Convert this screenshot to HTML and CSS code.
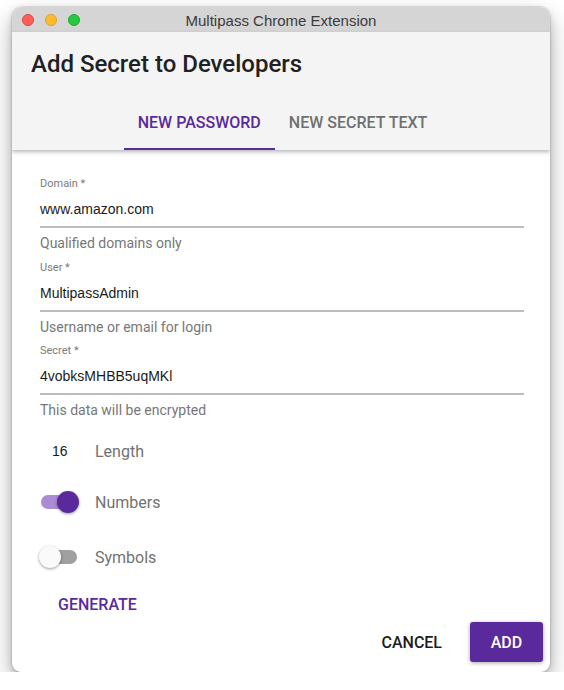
FILE: index.html
```html
<!DOCTYPE html>
<html lang="en">
<head>
<meta charset="utf-8">
<title>Multipass Chrome Extension</title>
<link rel="stylesheet" href="styles.css">
</head>
<body>
<div class="window">
  <div class="titlebar">
    <div class="lights">
      <span class="light red"></span>
      <span class="light yellow"></span>
      <span class="light green"></span>
    </div>
    <div class="wtitle">Multipass Chrome Extension</div>
  </div>
  <header class="header">
    <h1 class="dtitle">Add Secret to Developers</h1>
    <nav class="tabs">
      <div class="tab active">NEW PASSWORD</div>
      <div class="tab">NEW SECRET TEXT</div>
    </nav>
  </header>
  <main class="content">
    <div class="field">
      <div class="label">Domain *</div>
      <div class="value">www.amazon.com</div>
      <div class="helper">Qualified domains only</div>
    </div>
    <div class="field">
      <div class="label">User *</div>
      <div class="value">MultipassAdmin</div>
      <div class="helper">Username or email for login</div>
    </div>
    <div class="field">
      <div class="label">Secret *</div>
      <div class="value">4vobksMHBB5uqMKl</div>
      <div class="helper">This data will be encrypted</div>
    </div>
    <div class="row row-length">
      <div class="num">16</div>
      <div class="rowlabel">Length</div>
    </div>
    <div class="row row-numbers">
      <div class="toggle on"><span class="track"></span><span class="thumb"></span></div>
      <div class="rowlabel">Numbers</div>
    </div>
    <div class="row row-symbols">
      <div class="toggle"><span class="track"></span><span class="thumb"></span></div>
      <div class="rowlabel">Symbols</div>
    </div>
    <div class="generate-row">
      <button class="btn text-primary">GENERATE</button>
    </div>
  </main>
  <div class="actions">
    <button class="btn text-dark">CANCEL</button>
    <button class="btn raised">ADD</button>
  </div>
</div>
</body>
</html>
```
FILE: styles.css
```css
* { box-sizing: border-box; }
html, body { margin: 0; padding: 0; background: #ffffff; }
body { font-family: Roboto, "Noto Sans", sans-serif; }

.window {
  margin: 7px 0 0 12px;
  width: 538px;
  height: 665px;
  border-radius: 10px 10px 9px 9px;
  overflow: hidden;
  background: #ffffff;
  display: flex;
  flex-direction: column;
  box-shadow: 0 0 0 1px rgba(0,0,0,0.08), 0 10px 22px rgba(0,0,0,0.32), 0 2px 6px rgba(0,0,0,0.15);
}

.titlebar {
  height: 25px;
  background: #d5d5d5;
  display: flex;
  align-items: center;
  position: relative;
  flex: none;
}
.lights { display: flex; gap: 11px; padding-left: 10px; }
.light { width: 12px; height: 12px; border-radius: 50%; display: block; }
.red { background: #fc5f57; border: 0.5px solid #e0443e; }
.yellow { background: #fdbc2e; border: 0.5px solid #dea123; }
.green { background: #28c840; border: 0.5px solid #1aab29; }
.wtitle {
  position: absolute; left: 0; right: 0; top: 0; bottom: 0;
  display: flex; align-items: center; justify-content: center;
  font-family: "Liberation Sans", Arial, sans-serif;
  font-size: 15px;
  color: #3b3b3b;
  padding-top: 1px;
}

.header {
  background: #f4f4f4;
  flex: none;
  padding-top: 18px;
  box-shadow: 0 2px 4px rgba(0,0,0,0.28);
  position: relative;
  z-index: 1;
}
.dtitle {
  margin: 0;
  padding-left: 19px;
  font-size: 24px;
  line-height: 28px;
  font-weight: 500;
  color: #212121;
}
.tabs {
  display: flex;
  justify-content: center;
  margin-top: 22px;
  padding-left: 3px;
}
.tab {
  padding: 13px 14px 16px;
  font-size: 16px;
  line-height: 19px;
  font-weight: 500;
  color: #707070;
  border-bottom: 2px solid transparent;
}
.tab.active { color: #5a2a9c; border-bottom-color: #5a2a9c; }

.content {
  flex: 1 1 auto;
  min-height: 0;
  padding: 27px 26px 0 28px;
  display: flex;
  flex-direction: column;
}
.field + .field { margin-top: 9.5px; }
.label {
  font-size: 11px;
  line-height: 13px;
  color: #7b7b7b;
}
.value {
  margin-top: 9px;
  font-family: "Liberation Sans", Arial, sans-serif;
  font-size: 14px;
  line-height: 20px;
  color: #1a1a1a;
  padding-bottom: 7px;
  border-bottom: 2px solid #bdbdbd;
}
.helper {
  margin-top: 7px;
  font-size: 14px;
  line-height: 16px;
  color: #777777;
}

.row {
  display: flex;
  align-items: center;
  height: 40px;
  flex: none;
}
.row-length { margin-top: 13px; }
.row-numbers { margin-top: 11px; }
.row-symbols { margin-top: 15px; }
.num {
  width: 55px;
  padding-left: 12px;
  font-family: "Liberation Sans", Arial, sans-serif;
  font-size: 14px;
  color: #1a1a1a;
}
.rowlabel {
  font-size: 16px;
  color: #727272;
}
.toggle {
  position: relative;
  width: 40px;
  height: 24px;
  margin-left: -1px;
  margin-right: 16px;
}
.track {
  position: absolute;
  left: 2px; top: 5px;
  width: 36px; height: 14px;
  border-radius: 7px;
  background: #a0a0a0;
}
.thumb {
  position: absolute;
  left: 0; top: 1px;
  width: 22px; height: 22px;
  border-radius: 50%;
  background: #fafafa;
  box-shadow: 0 1px 3px rgba(0,0,0,0.4);
}
.toggle.on .track { background: #a98cd3; }
.toggle.on .thumb { left: 18px; background: #5a2a9c; }

.generate-row { margin-top: 9px; height: 36px; display: flex; flex: none; }
.btn {
  font-family: Roboto, "Noto Sans", sans-serif;
  font-size: 16px;
  font-weight: 500;
  border: none;
  background: transparent;
  height: 36px;
  padding: 0 16px;
  border-radius: 3px;
  cursor: pointer;
}
.text-primary { color: #5a2a9c; margin-left: 2px; }
.text-dark { color: #1c1c1c; }
.actions {
  flex: none;
  margin-top: auto;
  display: flex;
  justify-content: flex-end;
  align-items: center;
  gap: 12px;
  padding: 0 7px 10px 0;
}
.raised {
  height: 40px;
  width: 73px;
  padding: 0;
  background: #5a2a9c;
  color: #ffffff;
  box-shadow: 0 1px 4px rgba(0,0,0,0.35);
}
```
